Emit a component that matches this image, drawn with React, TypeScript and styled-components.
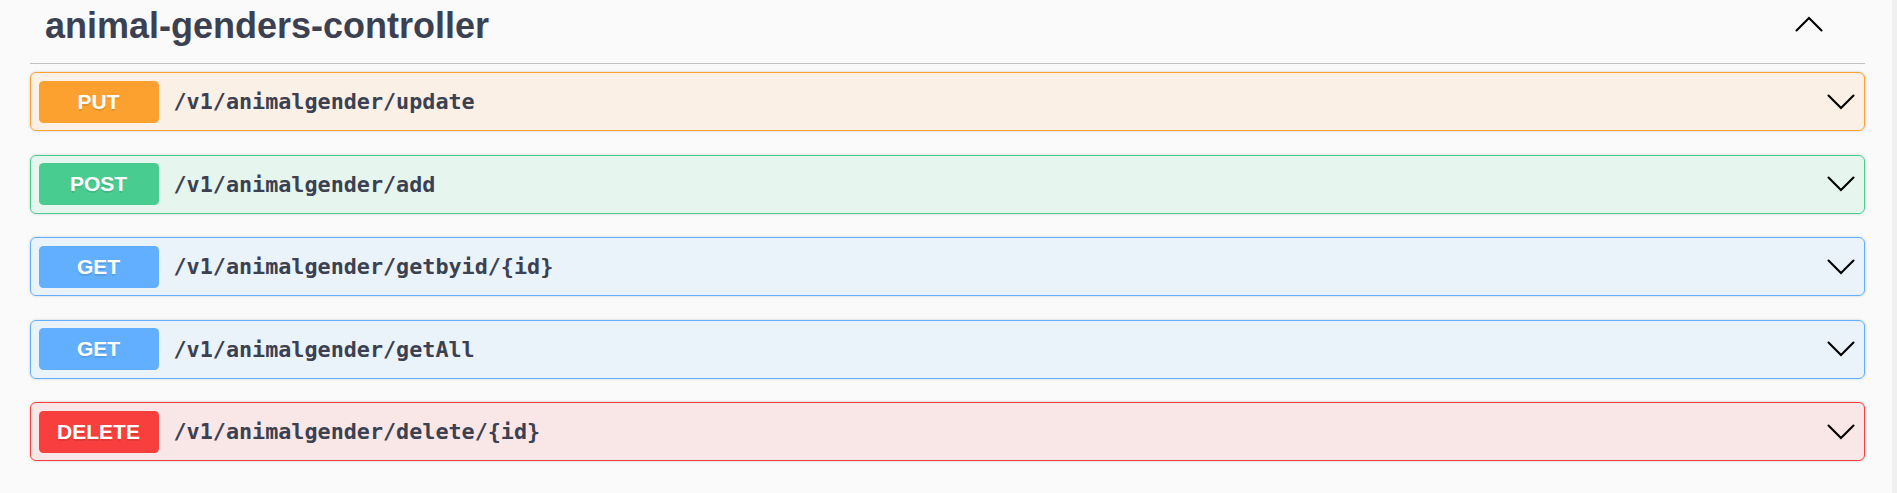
import React from "react";
import styled, { createGlobalStyle } from "styled-components";

const GlobalStyle = createGlobalStyle`
  html, body {
    margin: 0;
    padding: 0;
    background: #fafafa;
  }
  * { box-sizing: border-box; }
`;

type Method = "PUT" | "POST" | "GET" | "DELETE";

const palette: Record<Method, { main: string; bg: string }> = {
  PUT: { main: "#fca130", bg: "rgba(252,161,48,.1)" },
  POST: { main: "#49cc90", bg: "rgba(73,204,144,.1)" },
  GET: { main: "#61affe", bg: "rgba(97,175,254,.1)" },
  DELETE: { main: "#f93e3e", bg: "rgba(249,62,62,.1)" },
};

const Page = styled.div`
  display: flex;
  min-height: 493px;
  background: #fafafa;
`;

const Main = styled.main`
  flex: 1;
  padding: 0 27px 0 30px;
`;

const Track = styled.div`
  width: 5px;
  background: #f0f0f0;
`;

const TagHeader = styled.div`
  display: flex;
  align-items: flex-start;
  height: 64px;
  padding: 6px 42px 0 15px;
  border-bottom: 1px solid rgba(59, 65, 81, 0.3);
  margin-bottom: 8px;
`;

const TagTitle = styled.h3`
  flex: 1;
  margin: 0;
  font-family: "Liberation Sans", Arial, sans-serif;
  font-weight: 700;
  font-size: 36px;
  line-height: 40px;
  color: #3b4151;
`;

const ArrowButton = styled.button`
  display: flex;
  align-items: center;
  justify-content: center;
  margin-top: 10px;
  padding: 0;
  border: none;
  background: none;
  cursor: pointer;
`;

const Block = styled.div<{ $method: Method }>`
  display: flex;
  align-items: center;
  height: 59px;
  padding: 0 7.5px;
  margin-bottom: 23.5px;
  border: 1px solid ${(p) => palette[p.$method].main};
  border-radius: 6px;
  background: ${(p) => palette[p.$method].bg};
  box-shadow: 0 0 3px rgba(0, 0, 0, 0.19);
`;

const MethodBadge = styled.span<{ $method: Method }>`
  display: flex;
  align-items: center;
  justify-content: center;
  width: 120px;
  height: 42px;
  border-radius: 4.5px;
  background: ${(p) => palette[p.$method].main};
  color: #fff;
  font-family: "Liberation Sans", Arial, sans-serif;
  font-weight: 700;
  font-size: 21px;
  text-shadow: 0 1.5px 0 rgba(0, 0, 0, 0.1);
`;

const Path = styled.span`
  flex: 1;
  padding: 0 15px;
  font-family: "DejaVu Sans Mono", "Liberation Mono", monospace;
  font-weight: 700;
  font-size: 21.75px;
  color: #3b4151;
`;

const RowArrow = styled.span`
  display: flex;
  margin-right: 2px;
`;

const Chevron = ({ up = false }: { up?: boolean }) => (
  <svg width="28" height="16" viewBox="0 0 28 16" aria-hidden="true">
    <polyline
      points={up ? "1.5,14.5 14,2 26.5,14.5" : "1.5,1.5 14,14 26.5,1.5"}
      fill="none"
      stroke="#000"
      strokeWidth="2.1"
      strokeLinecap="round"
      strokeLinejoin="miter"
    />
  </svg>
);

const ops: { method: Method; path: string }[] = [
  { method: "PUT", path: "/v1/animalgender/update" },
  { method: "POST", path: "/v1/animalgender/add" },
  { method: "GET", path: "/v1/animalgender/getbyid/{id}" },
  { method: "GET", path: "/v1/animalgender/getAll" },
  { method: "DELETE", path: "/v1/animalgender/delete/{id}" },
];

export default function App() {
  return (
    <>
      <GlobalStyle />
      <Page>
        <Main>
          <TagHeader>
            <TagTitle>animal-genders-controller</TagTitle>
            <ArrowButton aria-label="collapse">
              <Chevron up />
            </ArrowButton>
          </TagHeader>
          {ops.map((op) => (
            <Block key={op.path} $method={op.method}>
              <MethodBadge $method={op.method}>{op.method}</MethodBadge>
              <Path>{op.path}</Path>
              <RowArrow>
                <Chevron />
              </RowArrow>
            </Block>
          ))}
        </Main>
        <Track />
      </Page>
    </>
  );
}
